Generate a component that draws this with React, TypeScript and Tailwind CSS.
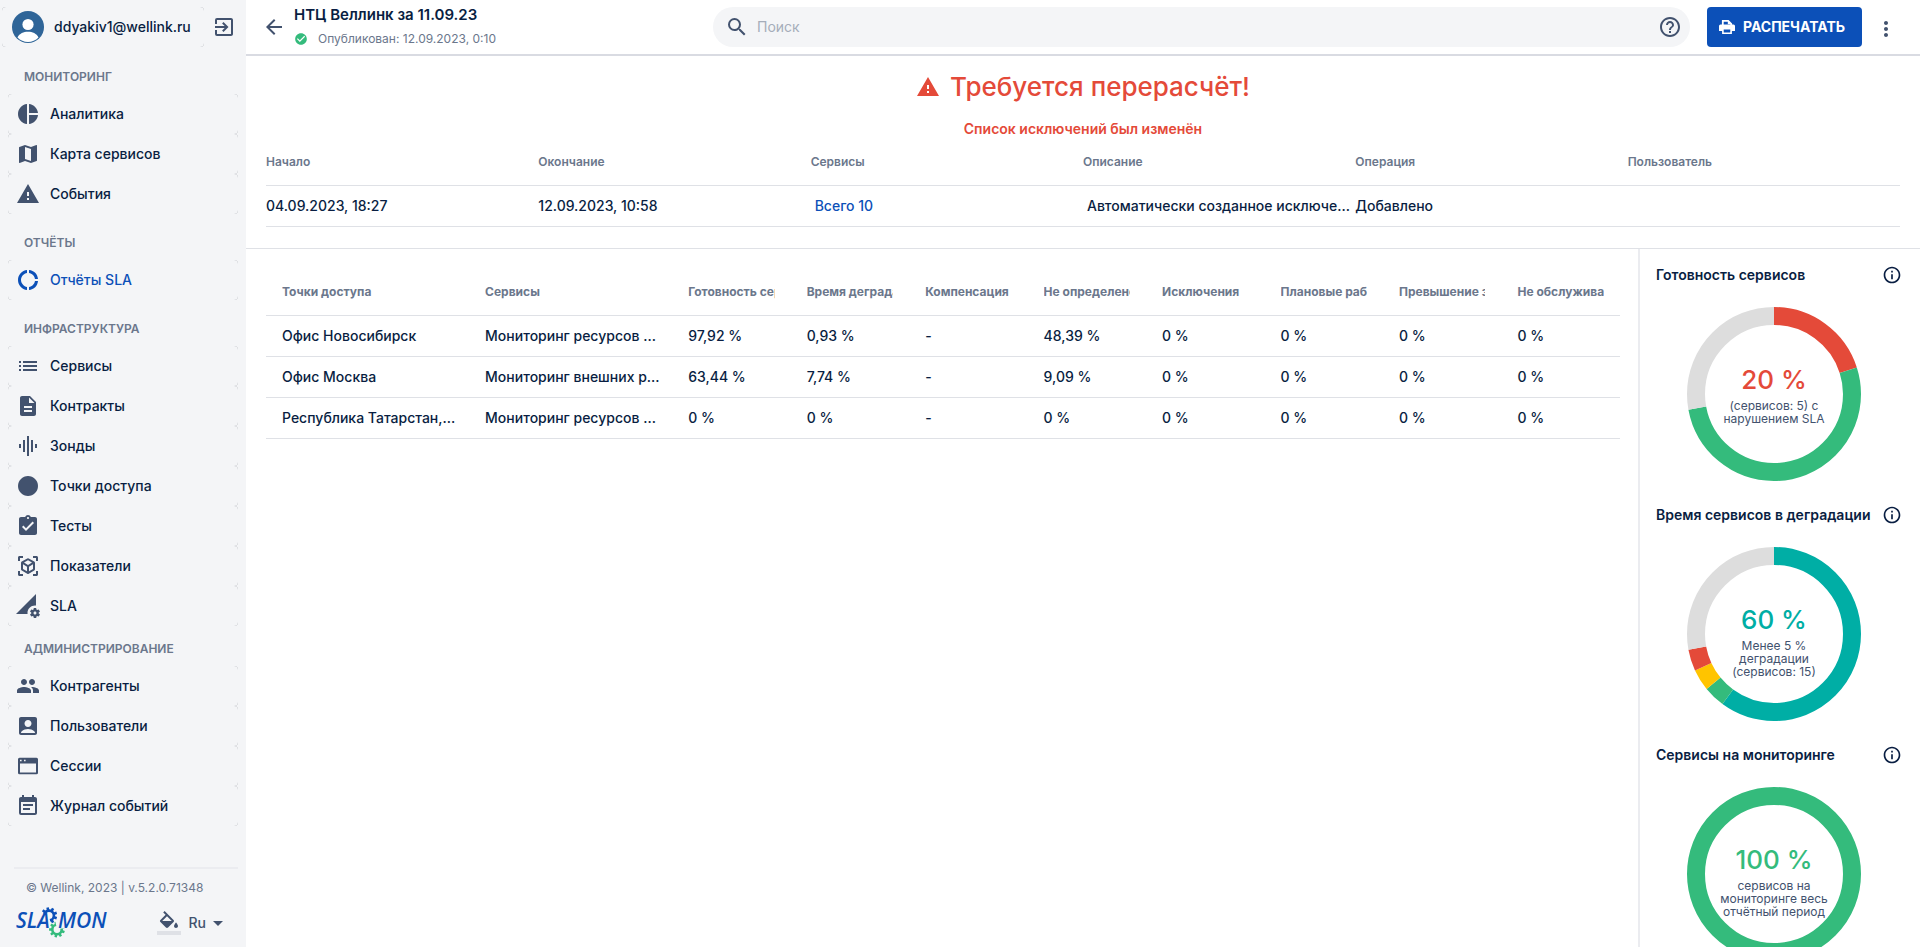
import React from "react";
import {
  MdPieChart, MdMap, MdWarning, MdDonutLarge, MdList, MdDescription, MdGraphicEq, MdCircle,
  MdAssignmentTurnedIn, MdViewInAr, MdPermDataSetting, MdPeople, MdAccountBox, MdEventNote,
  MdExitToApp, MdArrowDropDown, MdArrowBack, MdSearch, MdHelpOutline, MdMoreVert,
  MdInfoOutline, MdCheckCircle, MdFormatColorFill,
} from "react-icons/md";

type Item = { label: string; icon: React.ReactNode; active?: boolean };

function WindowIcon() {
  return (
    <svg viewBox="0 0 24 24" className="size-6" fill="currentColor" aria-hidden="true">
      <path fillRule="evenodd" d="M3.500 3.700h17A1.500 1.500 0 0 1 22 5.200v13.600a1.500 1.500 0 0 1-1.500 1.500h-17A1.500 1.500 0 0 1 2 18.800V5.200a1.500 1.500 0 0 1 1.500-1.500zM4 9.500v9h16v-9zM4 5.700v1.600h1.600V5.700zm4 0v1.600h1.600V5.700z" />
    </svg>
  );
}

function PrinterIcon() {
  return (
    <svg viewBox="0 0 16 16" className="size-4" aria-hidden="true">
      <path d="M3.800 6V1.800h5.400l3 3V6" fill="none" stroke="currentColor" strokeWidth="1.800" />
      <path d="M8.800 1.500v3.700h3.700z" fill="currentColor" />
      <path d="M1.500 5.500h13A1.500 1.500 0 0 1 16 7v5H0V7a1.500 1.500 0 0 1 1.500-1.500z" fill="currentColor" />
      <path d="M3.900 9.700h8.200v4.500H3.900z" fill="#0c50b8" stroke="currentColor" strokeWidth="1.600" />
    </svg>
  );
}

const groups: { title: string; head: string; items: Item[] }[] = [
  {
    title: "МОНИТОРИНГ",
    head: "pt-[21px]",
    items: [
      { label: "Аналитика", icon: <MdPieChart /> },
      { label: "Карта сервисов", icon: <MdMap /> },
      { label: "События", icon: <MdWarning /> },
    ],
  },
  {
    title: "ОТЧЁТЫ",
    head: "pt-[21px]",
    items: [{ label: "Отчёты SLA", icon: <MdDonutLarge />, active: true }],
  },
  {
    title: "ИНФРАСТРУКТУРА",
    head: "pt-[21px]",
    items: [
      { label: "Сервисы", icon: <MdList /> },
      { label: "Контракты", icon: <MdDescription /> },
      { label: "Зонды", icon: <MdGraphicEq /> },
      { label: "Точки доступа", icon: <MdCircle /> },
      { label: "Тесты", icon: <MdAssignmentTurnedIn /> },
      { label: "Показатели", icon: <MdViewInAr /> },
      { label: "SLA", icon: <MdPermDataSetting /> },
    ],
  },
  {
    title: "АДМИНИСТРИРОВАНИЕ",
    head: "pt-[15px]",
    items: [
      { label: "Контрагенты", icon: <MdPeople /> },
      { label: "Пользователи", icon: <MdAccountBox /> },
      { label: "Сессии", icon: <WindowIcon /> },
      { label: "Журнал событий", icon: <MdEventNote /> },
    ],
  },
];

function gearPath(cx: number, cy: number, outer: number, inner: number, hole: number, teeth: number) {
  const points: string[] = [];
  const step = (Math.PI * 2) / teeth;
  for (let i = 0; i < teeth; i++) {
    const a = (i + 0.5) * step;
    [[-0.3, inner], [-0.22, outer], [0.22, outer], [0.3, inner]].forEach(([k, r]) => {
      points.push(`${(cx + r * Math.cos(a + k * step)).toFixed(2)} ${(cy + r * Math.sin(a + k * step)).toFixed(2)}`);
    });
  }
  return `M${points.join("L")}ZM${cx} ${cy - hole}a${hole} ${hole} 0 1 0 0 ${hole * 2}a${hole} ${hole} 0 1 0 0 ${-hole * 2}Z`;
}

function Logo() {
  return (
    <svg viewBox="0 0 92 32" className="h-8 w-[92px]" role="img" aria-label="SLAMON">
      <clipPath id="upper-gear"><path d="M24 5V-2h20v20H35L33 9l-7-3z" /></clipPath>
      <clipPath id="lower-gear"><path d="M30 13h9l2 9 10-1v12H30z" /></clipPath>
      <path d={gearPath(33, 8.500, 8.300, 6.200, 3.600, 9)} fillRule="evenodd" fill="#0c50b8" clipPath="url(#upper-gear)" />
      <path d={gearPath(41, 22.500, 8, 6, 3.400, 9)} fillRule="evenodd" fill="#34bb7c" clipPath="url(#lower-gear)" />
      <g fontSize="21" fontStyle="italic" fontWeight="600" fontFamily="Open Sans, Noto Sans, sans-serif" fill="#0c50b8">
        <text x="0" y="21">SLA</text>
        <text x="42" y="21">MON</text>
      </g>
    </svg>
  );
}

function Sidebar() {
  return (
    <aside className="flex w-[246px] shrink-0 flex-col bg-[#f4f5f7]">
      <div className="flex items-center justify-between pt-[7px] pr-2.5 pl-0.5">
        <div className="w-[202px] rounded-sm bg-[#8f939b]">
          <button className="flex h-10 w-full items-center gap-2.5 rounded-sm bg-[#f4f5f7] pl-2.5">
            <svg viewBox="0 0 32 32" className="size-8 shrink-0" aria-hidden="true">
              <circle cx="16" cy="16" r="16" fill="#2f6598" />
              <circle cx="16" cy="13.500" r="5.600" fill="#fff" />
              <path d="M5.500 26.500C7.500 22.500 11.500 20.800 16 20.800s8.500 1.700 10.500 5.700A15 15 0 0 1 16 31a15 15 0 0 1-10.500-4.500z" fill="#fff" />
            </svg>
            <span className="font-medium">ddyakiv1@wellink.ru</span>
          </button>
        </div>
        <button aria-label="Выйти" className="text-2xl text-[#42526e]"><MdExitToApp /></button>
      </div>
      <nav className="flex flex-col pt-px">
        {groups.map((g) => (
          <section key={g.title}>
            <h2 className={`${g.head} pb-[9px] pl-6 text-xs leading-4 font-semibold text-[#6b778c]`}>{g.title}</h2>
            <ul className="px-2">
              {g.items.map((it) => (
                <li key={it.label} className="rounded-sm bg-[#8f939b]">
                  <a href="#" className="flex h-10 items-center gap-2.5 rounded-sm bg-[#f4f5f7] pl-2 font-medium">
                    <span className={it.active ? "text-2xl text-[#0c50b8]" : "text-2xl text-[#42526e]"}>{it.icon}</span>
                    <span className={it.active ? "text-[#0c50b8]" : ""}>{it.label}</span>
                  </a>
                </li>
              ))}
            </ul>
          </section>
        ))}
      </nav>
      <footer className="mt-auto pr-2 pb-2 pl-3.5">
        <div className="border-t-2 border-[#ebecf0] pt-[11px] pl-3 text-xs leading-4 text-[#6b778c]">© Wellink, 2023 | v.5.2.0.71348</div>
        <div className="flex items-center justify-between pt-[11px] pr-2 pl-0.5">
          <Logo />
          <div className="flex items-center gap-2">
            <button aria-label="Цвет темы" className="flex flex-col items-center text-2xl text-[#42526e]">
              <span className="h-5 overflow-hidden"><MdFormatColorFill /></span>
              <span className="h-1 w-6 bg-[#dfe1e6]" />
            </button>
            <button className="flex items-center font-medium text-[#42526e]">Ru<MdArrowDropDown className="size-6" /></button>
          </div>
        </div>
      </footer>
    </aside>
  );
}

function Header() {
  return (
    <header className="flex h-14 shrink-0 items-start border-b-2 border-[#d9dbe2] pl-4">
      <button aria-label="Назад" className="mt-[15px] text-2xl text-[#42526e]"><MdArrowBack /></button>
      <div className="w-[427px] shrink-0 pt-[3px] pl-2">
        <h1 className="text-[15px] leading-6 font-semibold">НТЦ Веллинк за 11.09.23</h1>
        <p className="flex items-center gap-2.5 text-xs leading-6 text-[#6b778c]">
          <MdCheckCircle className="size-3.5 text-[#34bb7c]" />Опубликован: 12.09.2023, 0:10
        </p>
      </div>
      <label className="mt-[7px] flex h-10 flex-1 items-center rounded-full bg-[#f4f5f7] pr-2 pl-3 text-[#42526e]">
        <MdSearch className="size-6" />
        <input type="search" placeholder="Поиск" aria-label="Поиск" className="ml-2 flex-1 bg-transparent outline-none placeholder:text-[#a5adba]" />
        <MdHelpOutline className="size-6" />
      </label>
      <button className="mt-[7px] ml-[17px] flex h-10 w-[155px] items-center gap-2 rounded-sm bg-[#0c50b8] pl-3 font-bold text-white">
        <PrinterIcon />РАСПЕЧАТАТЬ
      </button>
      <button aria-label="Ещё" className="mt-[17px] mr-[22px] ml-3 text-2xl text-[#42526e]"><MdMoreVert /></button>
    </header>
  );
}

function Alert() {
  const heads = ["Начало", "Окончание", "Сервисы", "Описание", "Операция", "Пользователь"];
  return (
    <section className="border-b border-[#dfe1e6] px-5 pt-2.5 pb-[21px]">
      <div className="flex items-center justify-center gap-2.5 text-[26px] leading-[42px] font-medium text-[#e44a39]">
        <MdWarning className="size-6" />
        <h2>Требуется перерасчёт!</h2>
      </div>
      <p className="pt-[11px] text-center leading-5 font-semibold text-[#e44a39]">Список исключений был изменён</p>
      <table className="w-full table-fixed border-collapse text-left">
        <thead>
          <tr className="border-b border-[#dfe1e6]">
            {heads.map((h) => <th key={h} className="h-[46px] text-xs font-semibold text-[#6b778c]">{h}</th>)}
          </tr>
        </thead>
        <tbody>
          <tr className="border-b border-[#dfe1e6] font-medium">
            <td className="h-[41px]">04.09.2023, 18:27</td>
            <td>12.09.2023, 10:58</td>
            <td><a href="#" className="px-1 text-[#0c50b8]">Всего 10</a></td>
            <td className="truncate px-1">Автоматически созданное исключение</td>
            <td>Добавлено</td>
            <td />
          </tr>
        </tbody>
      </table>
    </section>
  );
}

const columns = [
  "Точки доступа", "Сервисы", "Готовность сервисов", "Время деградации", "Компенсация",
  "Не определено", "Исключения", "Плановые работы", "Превышение значений", "Не обслуживается",
];
const rows = [
  ["Офис Новосибирск", "Мониторинг ресурсов сети", "97,92 %", "0,93 %", "-", "48,39 %", "0 %", "0 %", "0 %", "0 %"],
  ["Офис Москва", "Мониторинг внешних ресурсов", "63,44 %", "7,74 %", "-", "9,09 %", "0 %", "0 %", "0 %", "0 %"],
  ["Республика Татарстан, Казань", "Мониторинг ресурсов сети", "0 %", "0 %", "-", "0 %", "0 %", "0 %", "0 %", "0 %"],
];

function AccessTable() {
  return (
    <div className="min-w-0 flex-1 pt-[21px] pr-[18px] pl-5">
      <table className="w-full table-fixed border-collapse text-left">
        <colgroup>
          {columns.map((c, i) => <col key={c} className={i < 2 ? "w-[15%]" : "w-[8.75%]"} />)}
        </colgroup>
        <thead>
          <tr className="border-b border-[#dfe1e6]">
            {columns.map((c) => (
              <th key={c} className="h-[46px] px-4 text-xs font-bold whitespace-nowrap text-[#6b778c]">
                <div className="overflow-hidden">{c}</div>
              </th>
            ))}
          </tr>
        </thead>
        <tbody>
          {rows.map((r) => (
            <tr key={r[0]} className="border-b border-[#dfe1e6] font-medium">
              {r.map((v, i) => <td key={i} className="h-[41px] truncate pr-3 pl-4">{v}</td>)}
            </tr>
          ))}
        </tbody>
      </table>
    </div>
  );
}

type Segment = { color: string; from: number; to: number };

function Donut({ segments }: { segments: Segment[] }) {
  const r = 78;
  const length = 2 * Math.PI * r;
  return (
    <svg viewBox="0 0 174 174" className="size-[174px]" fill="none" strokeWidth="18" aria-hidden="true">
      {segments.map((s) => (
        <circle
          key={s.from} cx="87" cy="87" r={r} stroke={s.color} transform="rotate(-90 87 87)"
          strokeDasharray={`${((s.to - s.from) / 100) * length} ${length}`}
          strokeDashoffset={(-s.from / 100) * length}
        />
      ))}
    </svg>
  );
}

const charts = [
  {
    title: "Готовность сервисов", value: "20 %", tone: "text-[#e44a39]",
    lines: ["(сервисов: 5) с", "нарушением SLA"],
    segments: [
      { color: "#e44a39", from: 0, to: 20 },
      { color: "#34bb7c", from: 20, to: 72 },
      { color: "#dddddd", from: 72, to: 100 },
    ],
  },
  {
    title: "Время сервисов в деградации", value: "60 %", tone: "text-[#00aea5]",
    lines: ["Менее 5 %", "деградации", "(сервисов: 15)"],
    segments: [
      { color: "#00aea5", from: 0, to: 60 },
      { color: "#34bb7c", from: 60, to: 64 },
      { color: "#ffc400", from: 64, to: 68 },
      { color: "#e44a39", from: 68, to: 72 },
      { color: "#dddddd", from: 72, to: 100 },
    ],
  },
  {
    title: "Сервисы на мониторинге", value: "100 %", tone: "text-[#34bb7c]",
    lines: ["сервисов на", "мониторинге весь", "отчётный период"],
    segments: [{ color: "#34bb7c", from: 0, to: 100 }],
  },
];

function Charts() {
  return (
    <aside className="h-full w-[282px] shrink-0 overflow-hidden border-l-2 border-[#ebecf0] pt-1.5 pr-[18px] pl-4">
      {charts.map((c) => (
        <section key={c.title} className="h-60">
          <div className="flex h-10 items-center justify-between">
            <h3 className="font-semibold whitespace-nowrap">{c.title}</h3>
            <button aria-label="Подробнее" className="text-xl"><MdInfoOutline /></button>
          </div>
          <div className="mt-3 mr-2.5 grid place-items-center *:col-start-1 *:row-start-1">
            <Donut segments={c.segments} />
            <div className="self-start pt-[54px] text-center">
              <div className={`${c.tone} text-[26px] leading-[38px] font-medium`}>{c.value}</div>
              <p className="text-xs leading-[13px] text-[#42526e]">
                {c.lines.map((l) => <span key={l} className="block">{l}</span>)}
              </p>
            </div>
          </div>
        </section>
      ))}
    </aside>
  );
}

export default function App() {
  return (
    <div className="flex h-screen overflow-hidden bg-white font-['Inter',sans-serif] text-sm text-[#091e42]">
      <Sidebar />
      <div className="flex min-w-0 flex-1 flex-col">
        <Header />
        <main className="flex min-h-0 flex-1 flex-col">
          <Alert />
          <div className="flex min-h-0 flex-1">
            <AccessTable />
            <Charts />
          </div>
        </main>
      </div>
    </div>
  );
}
